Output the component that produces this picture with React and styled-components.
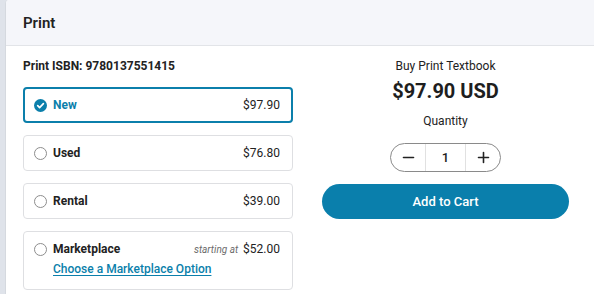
import React from "react";
import styled, { createGlobalStyle } from "styled-components";

const Global = createGlobalStyle`
  html, body { margin: 0; padding: 0; }
  body {
    background: #dfe3ea;
    font-family: Roboto, "Liberation Sans", Arial, sans-serif;
    color: #222;
    -webkit-font-smoothing: antialiased;
  }
`;

const Panel = styled.section`
  margin-left: 5px;
  background: #fff;
  border-left: 1px solid #d5d9df;
  border-top-left-radius: 4px;
  min-height: 294px;
  overflow: hidden;
`;

const Header = styled.header`
  height: 45px;
  display: flex;
  align-items: center;
  padding-left: 17px;
  background: #f5f6fa;
  border-bottom: 1px solid #e2e4e8;
  font-size: 15px;
  font-weight: 600;
  color: #222;
`;

const Body = styled.div`
  display: grid;
  grid-template-columns: 270px 247px;
  column-gap: 29px;
  padding: 12px 17px;
`;

const Column = styled.div`
  display: flex;
  flex-direction: column;
`;

const Isbn = styled.div`
  font-size: 12px;
  font-weight: 700;
  line-height: 16px;
  margin-bottom: 13px;
`;

const Options = styled.div`
  display: flex;
  flex-direction: column;
  gap: 12px;
`;

const Card = styled.label`
  box-sizing: border-box;
  display: flex;
  flex-direction: column;
  justify-content: center;
  gap: 4px;
  min-height: 36px;
  padding: ${(p) => (p.$tall ? "9px 12px 12px 10px" : "0 12px 0 10px")};
  border: ${(p) => (p.$selected ? "2px solid #0b7fab" : "1px solid #dedfe2")};
  padding-left: ${(p) => (p.$selected ? "9px" : "10px")};
  padding-right: ${(p) => (p.$selected ? "11px" : "12px")};
  border-radius: 4px;
  background: #fff;
  cursor: pointer;
`;

const Row = styled.div`
  display: flex;
  align-items: center;
  height: 16px;
`;

const Radio = styled.span`
  box-sizing: border-box;
  width: 13px;
  height: 13px;
  border-radius: 50%;
  border: ${(p) => (p.$checked ? "none" : "1px solid #8d8d8d")};
  flex: none;
  display: flex;
  align-items: center;
  justify-content: center;
  margin-right: 6px;
`;

const Label = styled.span`
  font-size: 12px;
  font-weight: 700;
  color: ${(p) => (p.$selected ? "#0b7fab" : "#222")};
  flex: 1;
`;

const Starting = styled.span`
  font-size: 10px;
  font-style: italic;
  color: #6b6b6b;
  margin-right: 5px;
`;

const Price = styled.span`
  font-size: 12px;
  color: #222;
`;

const Link = styled.a`
  margin-left: 19px;
  font-size: 12px;
  font-weight: 500;
  line-height: 16px;
  color: #0b7fab;
  text-decoration: underline;
  text-underline-offset: 2px;
`;

const Right = styled(Column)`
  align-items: center;
`;

const Small = styled.div`
  font-size: 12px;
  line-height: 16px;
  color: #222;
  margin-top: ${(p) => p.$mt || 0}px;
`;

const Big = styled.div`
  font-size: 20px;
  font-weight: 700;
  line-height: 24px;
  margin-top: 5px;
  color: #1e1e1e;
`;

const Stepper = styled.div`
  box-sizing: border-box;
  margin-top: 14px;
  width: 111px;
  height: 29px;
  border: 1.5px solid #8a8a8a;
  border-radius: 15px;
  display: grid;
  grid-template-columns: 35px 40px 1fr;
  overflow: hidden;
`;

const StepBtn = styled.button`
  border: none;
  background: transparent;
  padding: 0;
  display: flex;
  align-items: center;
  justify-content: center;
  color: #222;
  border-right: ${(p) => (p.$divider ? "1px solid #e1e1e1" : "none")};
`;

const Qty = styled.div`
  display: flex;
  align-items: center;
  justify-content: center;
  font-size: 13px;
  font-weight: 500;
  border-right: 1px solid #e1e1e1;
  color: #222;
`;

const CartButton = styled.button`
  margin-top: 12px;
  width: 247px;
  height: 35px;
  border: none;
  border-radius: 18px;
  background: #0a7fac;
  color: #fff;
  font-family: inherit;
  font-size: 13px;
  font-weight: 500;
`;

const Check = () => (
  <svg width="13" height="13" viewBox="0 0 13 13">
    <circle cx="6.5" cy="6.5" r="6.5" fill="#0b7fab" />
    <path d="M3.7 6.7l1.9 1.9 3.8-3.9" fill="none" stroke="#fff" strokeWidth="1.7" strokeLinecap="round" strokeLinejoin="round" />
  </svg>
);

const Minus = () => (
  <svg width="13" height="13" viewBox="0 0 13 13">
    <path d="M1.5 6.5h10" stroke="#222" strokeWidth="1.6" strokeLinecap="round" />
  </svg>
);

const Plus = () => (
  <svg width="13" height="13" viewBox="0 0 13 13">
    <path d="M1.5 6.5h10M6.5 1.5v10" stroke="#222" strokeWidth="1.6" strokeLinecap="round" />
  </svg>
);

const options = [
  { id: "new", label: "New", price: "$97.90", selected: true },
  { id: "used", label: "Used", price: "$76.80" },
  { id: "rental", label: "Rental", price: "$39.00" },
];

export default function App() {
  return (
    <>
      <Global />
      <Panel>
        <Header>Print</Header>
        <Body>
          <Column>
            <Isbn>Print ISBN: 9780137551415</Isbn>
            <Options>
              {options.map((o) => (
                <Card key={o.id} $selected={o.selected}>
                  <Row>
                    <Radio $checked={o.selected}>{o.selected && <Check />}</Radio>
                    <Label $selected={o.selected}>{o.label}</Label>
                    <Price>{o.price}</Price>
                  </Row>
                </Card>
              ))}
              <Card $tall>
                <Row>
                  <Radio />
                  <Label>Marketplace</Label>
                  <Starting>starting at</Starting>
                  <Price>$52.00</Price>
                </Row>
                <Row>
                  <Link href="#">Choose a Marketplace Option</Link>
                </Row>
              </Card>
            </Options>
          </Column>
          <Right>
            <Small>Buy Print Textbook</Small>
            <Big>$97.90 USD</Big>
            <Small $mt={10}>Quantity</Small>
            <Stepper>
              <StepBtn $divider aria-label="decrease">
                <Minus />
              </StepBtn>
              <Qty>1</Qty>
              <StepBtn aria-label="increase">
                <Plus />
              </StepBtn>
            </Stepper>
            <CartButton>Add to Cart</CartButton>
          </Right>
        </Body>
      </Panel>
    </>
  );
}
